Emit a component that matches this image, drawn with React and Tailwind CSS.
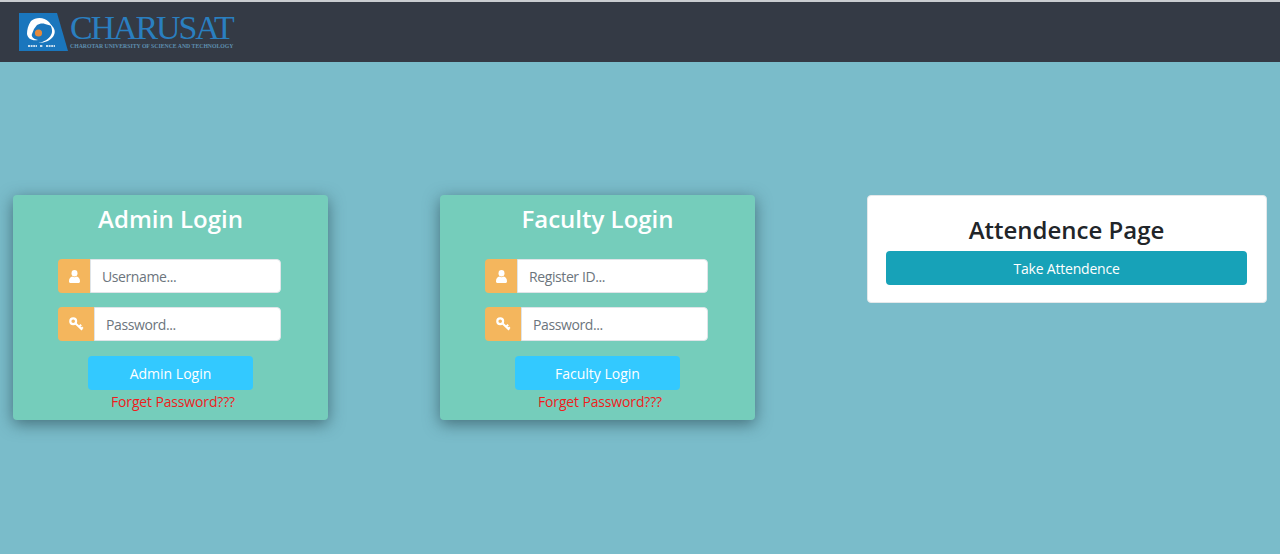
const FONT = "font-['Open_Sans','Noto_Sans',sans-serif]";

function UserIcon() {
  return (
    <svg width="11" height="13" viewBox="0 0 11 13" fill="white">
      <ellipse cx="5.5" cy="3.3" rx="3" ry="3.3" />
      <path d="M0 11.2C0 8.6 1.6 6.9 3.2 6.6c1.3.8 3.3.8 4.6 0C9.4 6.9 11 8.6 11 11.2c0 1-.6 1.8-1.6 1.8H1.6C.6 13 0 12.2 0 11.2z" />
    </svg>
  );
}

function KeyIcon() {
  return (
    <svg width="15" height="14" viewBox="0 0 15 14" fill="none" stroke="white">
      <circle cx="4.2" cy="4.2" r="2.9" strokeWidth="2.2" />
      <path d="M6.6 6.6l6.6 6.2M10 9.8l2.2-2M12.2 11.8l1.6-1.6" strokeWidth="2" />
    </svg>
  );
}

function InputRow({ icon, placeholder, addonWidth }) {
  return (
    <div className="flex h-[34px] w-[223px] overflow-hidden rounded">
      <div className={`flex shrink-0 items-center justify-center bg-[#f4b65d] ${addonWidth}`}>
        {icon}
      </div>
      <div className="flex flex-1 items-center rounded-r border border-[#dfe4e8] bg-white pt-[1px] pl-[11px] text-[14px] tracking-[-0.4px] text-[#6c757d]">
        {placeholder}
      </div>
    </div>
  );
}

function LoginCard({ title, idPlaceholder }) {
  return (
    <div className="flex h-[225px] w-[315px] shrink-0 flex-col items-center rounded bg-[#75cdbb] shadow-[0_4px_16px_rgba(40,70,80,0.65)]">
      <h2 className="mt-[6px] h-[37px] text-[24px] leading-[36px] font-semibold text-white">{title}</h2>
      <div className="mt-[21px] mr-[2px] flex flex-col gap-[14px]">
        <InputRow icon={<UserIcon />} placeholder={idPlaceholder} addonWidth="w-[32px]" />
        <InputRow icon={<KeyIcon />} placeholder="Password..." addonWidth="w-[36px]" />
      </div>
      <button className="mt-[15px] h-[34px] w-[165px] rounded bg-[#33c9ff] text-[14px] text-white">
        {title}
      </button>
      <a className="pl-[5px] text-[14px] leading-[23px] tracking-[-0.15px] text-[#f01c1c]">Forget Password???</a>
    </div>
  );
}

function Logo() {
  return (
    <div className="flex items-start">
      <svg width="50" height="40" viewBox="0 0 50 40" className="shrink-0">
        <polygon points="0,1 38,1 49,39 0,39" fill="#1a76bd" />
        {/* swoosh head and the two arcs round the orange dot */}
        <path d="M12 9c5-4 13-4 18 1l3 4-7-2c-3-1-6 0-8 1l-3 4-2 5c-1 2 1 5 6 6-6 1-10-1-11-6 0-4 1-9 4-13z" fill="white" />
        <path d="M31 12c4 3 6 7 4 11-2 5-9 8-16 8 6-1 11-4 13-8 2-3 1-7-1-11z" fill="white" />
        <circle cx="19.5" cy="21" r="3.6" fill="#e58a3c" />
        <path d="M9 34h9M21 34h3M27 34h9" stroke="white" strokeWidth="1.6" strokeDasharray="2 0.6" />
      </svg>
      <div className="mt-[2px] ml-[1px] flex flex-col">
        <span className="h-[27px] font-['Liberation_Serif',serif] text-[34px] leading-[27px] tracking-[-2.1px] text-[#2a7fc0]">
          CHARUSAT
        </span>
        <span className="mt-[2px] font-['Liberation_Serif',serif] text-[5.75px] leading-[7px] font-bold whitespace-nowrap text-[#5f8fb0]">
          CHAROTAR UNIVERSITY OF SCIENCE AND TECHNOLOGY
        </span>
      </div>
    </div>
  );
}

export default function App() {
  return (
    <div className={`flex h-[554px] flex-col overflow-hidden bg-[#7abcca] ${FONT}`}>
      <header className="h-[62px] shrink-0 border-t-2 border-[#c9ccd0] bg-[#343a45] pt-[10px] pl-[19px]">
        <Logo />
      </header>
      <main className="flex items-start gap-[112px] pt-[133px] pl-[13px]">
        <LoginCard title="Admin Login" idPlaceholder="Username..." />
        <LoginCard title="Faculty Login" idPlaceholder="Register ID..." />
        <div className="flex h-[108px] w-[400px] shrink-0 flex-col items-center rounded border border-[#e4e8ea] bg-white pr-[19px] pl-[18px]">
          <h2 className="mt-[16px] h-[39px] text-[24px] leading-[36px] font-semibold text-[#212529]">
            Attendence Page
          </h2>
          <button className="h-[34px] w-full rounded bg-[#17a2b8] text-[14px] tracking-[-0.2px] text-white">
            Take Attendence
          </button>
        </div>
      </main>
    </div>
  );
}
